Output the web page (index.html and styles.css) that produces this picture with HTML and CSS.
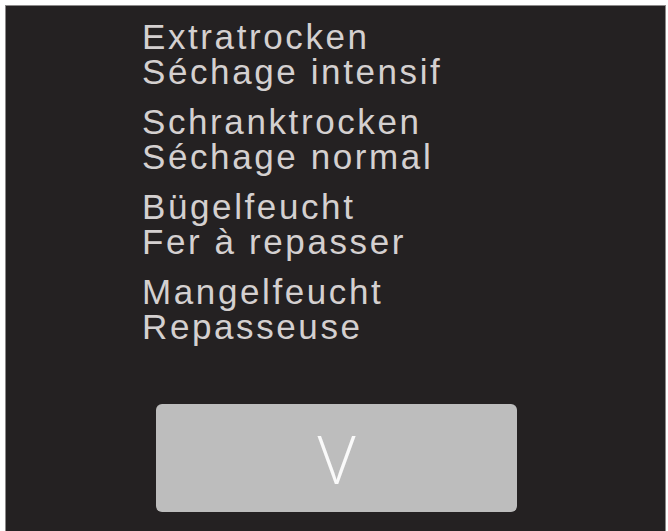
FILE: index.html
```html
<!DOCTYPE html>
<html lang="de">
<head>
    <meta charset="UTF-8">
    <meta name="viewport" content="width=device-width, initial-scale=1.0">
    <title>Trockenstufen</title>
    <link rel="stylesheet" href="styles.css">
</head>
<body>
    <div class="panel">
        <div class="program-list">
            <div class="program">
                <div>Extratrocken</div>
                <div>Séchage intensif</div>
            </div>
            <div class="program">
                <div>Schranktrocken</div>
                <div>Séchage normal</div>
            </div>
            <div class="program">
                <div>Bügelfeucht</div>
                <div>Fer à repasser</div>
            </div>
            <div class="program">
                <div>Mangelfeucht</div>
                <div>Repasseuse</div>
            </div>
        </div>

        <button class="confirm" type="button">V</button>
    </div>
</body>
</html>
```

FILE: styles.css
```css
body {
    margin: 0;
    padding: 0;
    background: #ffffff;
    font-family: 'Liberation Sans', Arial, sans-serif;
    overflow: hidden;
}

.panel {
    margin: 6px 0 0 6px;
    width: 659px;
    height: 525px;
    box-sizing: border-box;
    padding-top: 13px;
    background: #242122;
    box-shadow: 0 0 0 1px #8c8a8a;
}

.program-list {
    padding-left: 136px;
    display: flex;
    flex-direction: column;
    gap: 15px;
}

.program {
    font-size: 35px;
    line-height: 35px;
    letter-spacing: 2.6px;
    color: #d4d0d0;
}

.confirm {
    display: block;
    margin: 60px 0 0 150px;
    width: 361px;
    height: 108px;
    padding: 0;
    border: none;
    border-radius: 6px;
    background: #bdbdbd;
    color: #fafafa;
    font-family: 'Open Sans', sans-serif;
    font-weight: 300;
    font-size: 66px;
    line-height: 1;
    cursor: pointer;
}
```
